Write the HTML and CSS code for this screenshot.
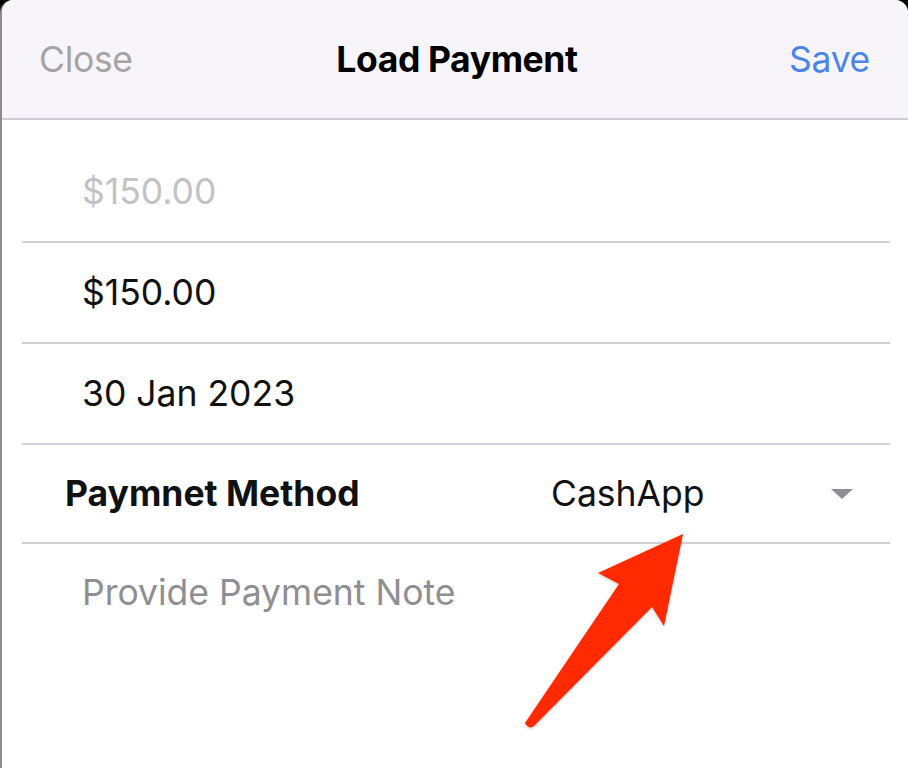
FILE: index.html
```
<!DOCTYPE html>
<html>
<head>
<meta charset="utf-8">
<link rel="stylesheet" href="styles.css">
</head>
<body>
<div class="sheet">
  <header class="nav">
    <span class="nav-btn close">Close</span>
    <span class="nav-title">Load Payment</span>
    <span class="nav-btn save">Save</span>
  </header>
  <main class="form">
    <div class="row first"><span class="placeholder">$150.00</span></div>
    <div class="row"><span class="value">$150.00</span></div>
    <div class="row"><span class="value">30 Jan 2023</span></div>
    <div class="row method">
      <span class="label">Paymnet Method</span>
      <span class="select">CashApp</span>
      <span class="caret"></span>
    </div>
    <div class="row note"><span class="placeholder dark">Provide Payment Note</span></div>
  </main>
  <svg class="arrow" width="908" height="768" viewBox="0 0 908 768">
    <defs>
      <filter id="sh" x="-20%" y="-20%" width="140%" height="140%">
        <feDropShadow dx="0" dy="1" stdDeviation="1.5" flood-color="#000" flood-opacity="0.25"/>
      </filter>
    </defs>
    <path filter="url(#sh)" fill="#ff2a00" d="M683 534 L664 626 L652 607 L534 726 Q529 730 525 723 L619 584 L598 573 Z"/>
  </svg>
</div>
</body>
</html>
```
FILE: styles.css
```
html, body {
  margin: 0;
  padding: 0;
  background: #000;
}
body {
  width: 908px;
  height: 768px;
  overflow: hidden;
  font-family: Inter, "Liberation Sans", sans-serif;
}
.sheet {
  position: relative;
  width: 906px;
  height: 780px;
  background: #fff;
  border-left: 2px solid #8c8c8c;
  border-radius: 13px 13px 0 0;
  overflow: hidden;
}
.nav {
  height: 118px;
  background: #f8f5fa;
  border-bottom: 2px solid #cfcdd3;
  display: flex;
  align-items: center;
  justify-content: space-between;
  padding: 0 38px 0 37px;
  position: relative;
}
.nav-btn {
  font-size: 35.5px;
  letter-spacing: -0.3px;
}
.close { color: #a4a4a7; }
.save { color: #4a86e6; }
.nav-title {
  position: absolute;
  left: 0;
  right: 0;
  text-align: center;
  font-size: 35.5px;
  font-weight: 700;
  color: #000;
  letter-spacing: -0.4px;
  pointer-events: none;
  padding-left: 4px;
}
.form {
  margin: 0 18px 0 20px;
}
.row {
  height: 99px;
  border-bottom: 2px solid #d2d0d5;
  display: flex;
  align-items: center;
  padding-left: 60px;
  font-size: 35.5px;
  color: #111;
}
.row.first {
  padding-top: 22px;
  box-sizing: border-box;
  height: 123px;
}
.placeholder { color: #c2c2c6; }
.placeholder.dark { color: #8e8e93; }
.row.method {
  padding-left: 43px;
  padding-right: 37px;
  height: 97px;
}
.label {
  font-weight: 700;
  width: 486px;
}
.select {
  flex: 1;
}
.caret {
  width: 0;
  height: 0;
  border-left: 11px solid transparent;
  border-right: 11px solid transparent;
  border-top: 10px solid #8e8e92;
}
.row.note {
  border-bottom: none;
  height: 96px;
}
.arrow {
  position: absolute;
  left: -2px;
  top: 0;
}
```
